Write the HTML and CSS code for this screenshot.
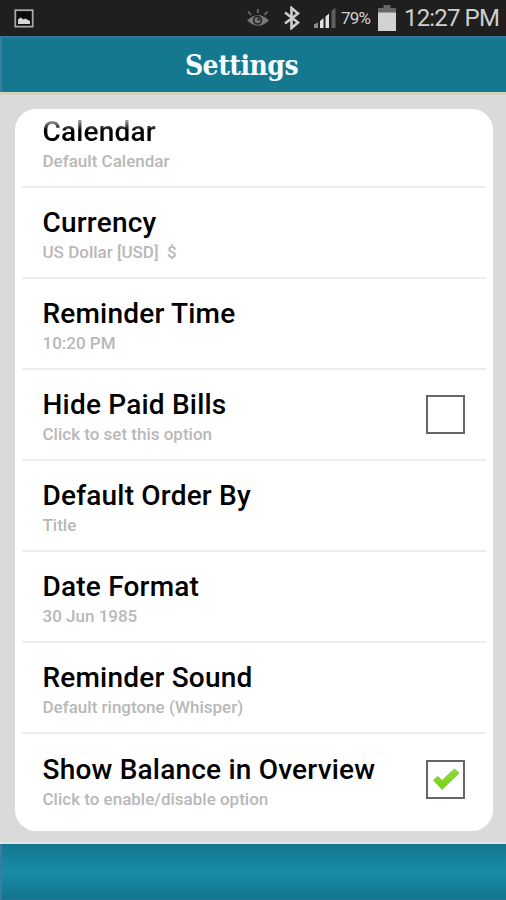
FILE: index.html
```
<!DOCTYPE html>
<html lang="en">
<head>
    <meta charset="UTF-8">
    <meta name="viewport" content="width=device-width, initial-scale=1.0">
    <title>Settings</title>
    <link rel="stylesheet" href="styles.css">
</head>
<body>

<!-- Status bar -->
<div class="status-bar">
    <svg class="icon-picture" width="20" height="19" viewBox="0 0 20 19">
        <rect x="1.3" y="1.2" width="17.4" height="16.4" fill="#0c0c0c" stroke="#a9a9a9" stroke-width="1.8"/>
        <path d="M4 15v-4.500l2.500-2 3 2 2-1 2.500 1.500 2 1v3z" fill="#d8d8d8"/>
    </svg>
    <div class="status-right">
        <svg class="icon-eye" width="24" height="20" viewBox="0 0 24 20">
            <path d="M1 12.500Q12 1.500 23 12.500Q12 23 1 12.500z" fill="#777"/>
            <circle cx="11.500" cy="12.200" r="4.600" fill="#222"/>
            <circle cx="11.500" cy="12.200" r="3" fill="#777"/>
            <circle cx="12.500" cy="11.200" r="1.200" fill="#222"/>
            <path d="M2 3.500l3 3.500M11.800 1v4M21.500 3.500l-3 3.500" stroke="#6a6a6a" stroke-width="1.800"/>
        </svg>
        <svg class="icon-bluetooth" width="18" height="24" viewBox="0 0 18 24">
            <path d="M2 6.500l13 10-6.500 5.500v-20l6.500 5.500-13 10" fill="none" stroke="#cfcfcf" stroke-width="2.600"/>
        </svg>
        <svg class="icon-signal" width="24" height="22" viewBox="0 0 24 22">
            <path d="M1 21v-3.500l4-2v5.500z" fill="#8c8c8c"/>
            <path d="M7 21v-7l3.500-3v10zM12.500 21v-11.500l3.500-3v14.500z" fill="#e0e0e0"/>
            <path d="M18.500 21v-17l4-3.500v20.500z" fill="#5e5e5e"/>
        </svg>
        <span class="battery-level">79%</span>
        <svg class="icon-battery" width="18" height="26" viewBox="0 0 18 26">
            <path d="M5.500 0h7v3h5.500v5h-18v-5h5.500z" fill="#666"/>
            <rect y="7.500" width="18" height="18.500" fill="#d2d2d2"/>
        </svg>
        <span class="clock">12:27 PM</span>
    </div>
</div>

<!-- Header -->
<div class="header">
    <h1>Settings</h1>
</div>

<!-- Settings list -->
<div class="content">
    <div class="card">
        <div class="row row-first">
            <div class="row-text">
                <div class="row-title">Calendar</div>
                <div class="row-value">Default Calendar</div>
            </div>
        </div>
        <div class="row">
            <div class="row-text">
                <div class="row-title">Currency</div>
                <div class="row-value">US Dollar [USD]&nbsp; $</div>
            </div>
        </div>
        <div class="row">
            <div class="row-text">
                <div class="row-title">Reminder Time</div>
                <div class="row-value">10:20 PM</div>
            </div>
        </div>
        <div class="row">
            <div class="row-text">
                <div class="row-title">Hide Paid Bills</div>
                <div class="row-value">Click to set this option</div>
            </div>
            <div class="checkbox"></div>
        </div>
        <div class="row">
            <div class="row-text">
                <div class="row-title">Default Order By</div>
                <div class="row-value">Title</div>
            </div>
        </div>
        <div class="row">
            <div class="row-text">
                <div class="row-title">Date Format</div>
                <div class="row-value">30 Jun 1985</div>
            </div>
        </div>
        <div class="row">
            <div class="row-text">
                <div class="row-title">Reminder Sound</div>
                <div class="row-value">Default ringtone (Whisper)</div>
            </div>
        </div>
        <div class="row">
            <div class="row-text">
                <div class="row-title">Show Balance in Overview</div>
                <div class="row-value">Click to enable/disable option</div>
            </div>
            <div class="checkbox">
                <svg width="28" height="24" viewBox="0 0 28 24">
                    <defs>
                        <linearGradient id="tick" x1="0" y1="0" x2="0" y2="1">
                            <stop offset="0" stop-color="#94d83a"/>
                            <stop offset="1" stop-color="#74d40c"/>
                        </linearGradient>
                    </defs>
                    <path d="M1.500 12l4.500-3.500 4 4 12.500-11.500 4.500 4-17 16.500z" fill="url(#tick)" stroke="#8cc94a" stroke-width="1" stroke-linejoin="round"/>
                </svg>
            </div>
        </div>
    </div>
</div>

<div class="footer"></div>

</body>
</html>
```
FILE: styles.css
```
body {
    margin: 0;
    height: 900px;
    display: flex;
    flex-direction: column;
    overflow: hidden;
    background-color: #dadada;
    font-family: Roboto, sans-serif;
}
.status-bar {
    height: 36px;
    box-sizing: border-box;
    padding: 0 7px 0 14px;
    display: flex;
    align-items: center;
    justify-content: space-between;
    background-color: #1f1f1f;
    color: #cfcfcf;
}
.status-right {
    display: flex;
    align-items: center;
}
.icon-bluetooth {
    margin-left: 13px;
}
.icon-signal {
    margin-left: 12px;
}
.battery-level {
    width: 31px;
    margin-left: 4px;
    font-size: 17px;
    letter-spacing: -0.8px;
}
.icon-battery {
    margin-left: 6px;
}
.clock {
    width: 95px;
    margin-left: 8px;
    font-size: 24px;
    letter-spacing: -0.85px;
    white-space: nowrap;
}
.header {
    height: 56px;
    box-sizing: border-box;
    border-top: 2px solid #3b759f;
    border-left: 2px solid #3b7aa8;
    display: flex;
    align-items: center;
    justify-content: center;
    background-color: #14788f;
}
h1 {
    margin: 0;
    padding-right: 25px;
    font-family: "DejaVu Serif Condensed", "DejaVu Serif", serif;
    font-size: 28px;
    font-stretch: condensed;
    letter-spacing: -0.5px;
    color: #f4fcff;
}
.content {
    height: 752px;
    box-sizing: border-box;
    padding: 14px 13.5px 0 14.5px;
    border-top: 3px solid #d2d1bd;
    border-bottom: 2px solid #e3e6e3;
}
.card {
    height: 722px;
    box-sizing: border-box;
    padding: 0 7px;
    border-radius: 21px;
    background-color: white;
}
.row {
    height: 91px;
    box-sizing: border-box;
    padding: 0 20.5px 0 21px;
    display: flex;
    align-items: center;
    justify-content: space-between;
    border-bottom: 2px solid #ececec;
}
.row:last-child {
    border-bottom: none;
}
.row-text {
    padding-top: 6px;
}
.row-first {
    height: 79px;
    padding-bottom: 12px;
    align-items: flex-end;
}
/* scrolled row fades out under the card edge */
.row-first .row-title {
    background: linear-gradient(#999 18%, #000 45%);
    background-clip: text;
    color: transparent;
}
.row-title {
    font-size: 28px;
    line-height: 34px;
    font-weight: 500;
    letter-spacing: 0.2px;
    color: #000;
    white-space: nowrap;
}
.row-value {
    font-size: 17px;
    line-height: 25px;
    font-weight: 500;
    color: #b8b8b8;
    white-space: nowrap;
}
.checkbox {
    width: 39px;
    height: 39px;
    box-sizing: border-box;
    border: 2px solid #666;
    display: flex;
    align-items: center;
    justify-content: center;
}
.footer {
    flex: 1;
    border-left: 2px solid #3b7aa8;
    border-bottom: 1px solid #2d7399;
    background: linear-gradient(#14768e, #188ca6 50%, #12748c);
}
```
